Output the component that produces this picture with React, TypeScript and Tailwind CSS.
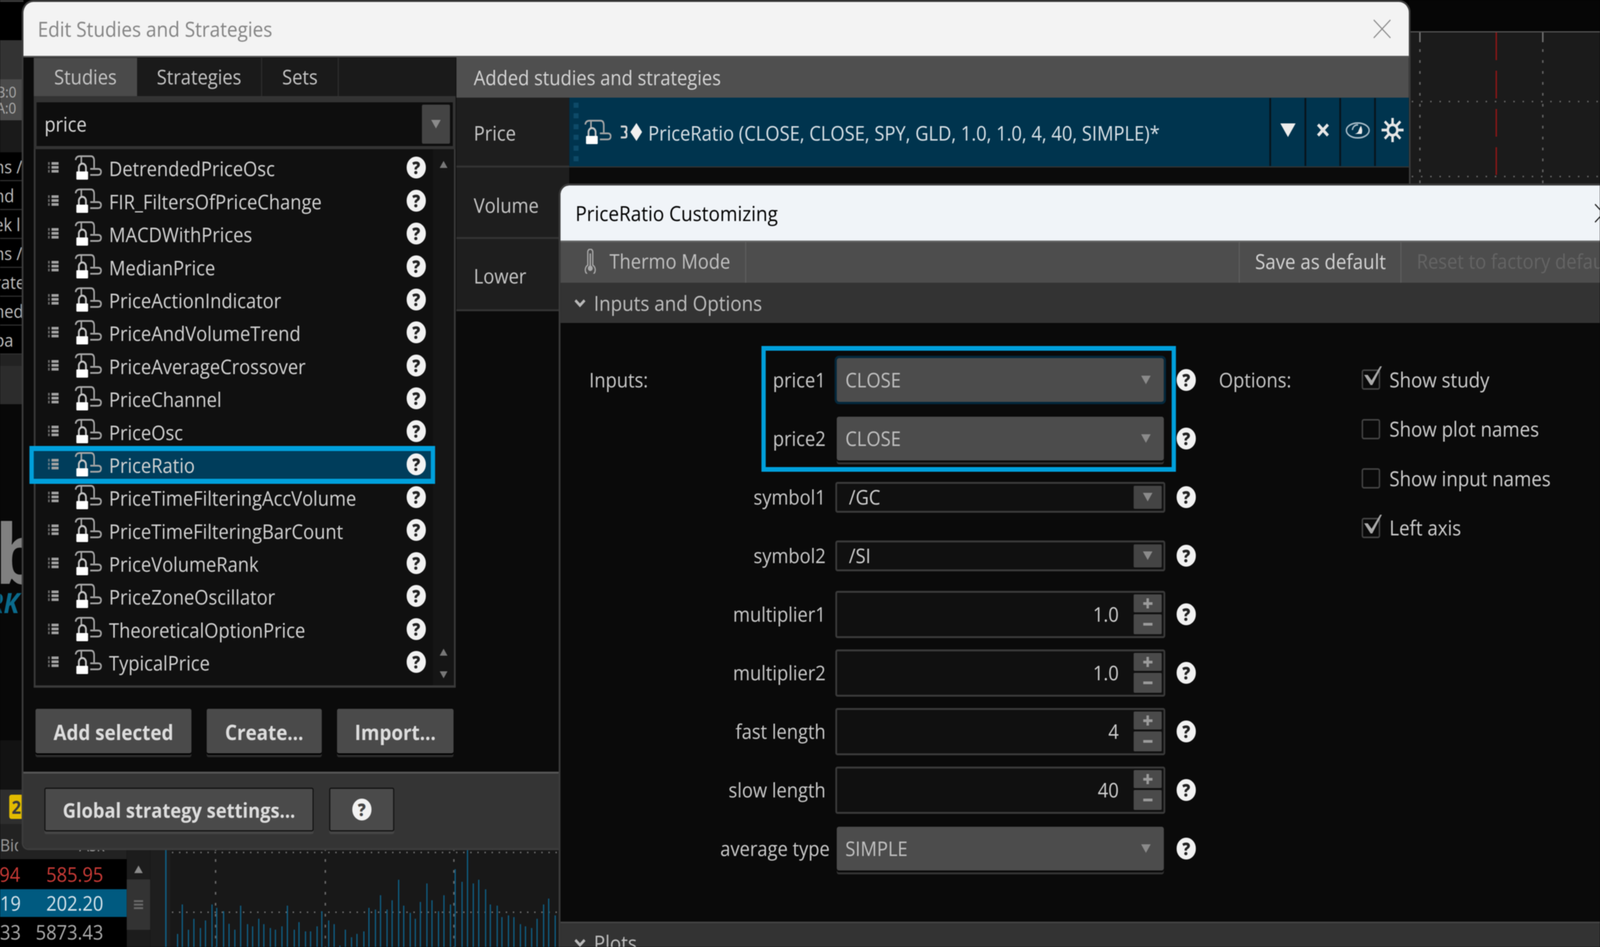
const studies = [
  'DetrendedPriceOsc',
  'FIR_FiltersOfPriceChange',
  'MACDWithPrices',
  'MedianPrice',
  'PriceActionIndicator',
  'PriceAndVolumeTrend',
  'PriceAverageCrossover',
  'PriceChannel',
  'PriceOsc',
  'PriceRatio',
  'PriceTimeFilteringAccVolume',
  'PriceTimeFilteringBarCount',
  'PriceVolumeRank',
  'PriceZoneOscillator',
  'TheoreticalOptionPrice',
  'TypicalPrice',
]

const sideRows = ['ns /', 'nd', 'ek l', 'ns /', 'rate', 'hed', 'pa']

// [x, top] read off the volume study under the dialog
const volume = [
  [490, 1490], [503, 1315], [520, 1465], [535, 1400], [553, 1455], [567, 1410], [585, 1315], [598, 1335],
  [617, 1355], [632, 1430], [648, 1465], [664, 1322], [683, 1432], [697, 1445], [714, 1400], [728, 1432],
  [746, 1455], [760, 1465], [778, 1445], [793, 1322], [812, 1465], [825, 1420], [843, 1475], [857, 1475],
  [875, 1445], [888, 1355], [907, 1410], [922, 1432], [938, 1560], [953, 1465], [970, 1510], [985, 1490],
  [1004, 1475], [1018, 1335], [1036, 1345], [1050, 1260], [1068, 1345], [1082, 1290], [1100, 1168], [1114, 1322],
  [1132, 1365], [1146, 1400], [1160, 1300], [1178, 1190], [1192, 1290], [1210, 1355], [1225, 1260], [1243, 1315],
  [1256, 1105], [1275, 1180], [1290, 980], [1306, 1190], [1321, 1168], [1340, 1225], [1353, 1315], [1372, 1322],
  [1385, 1390], [1403, 1380], [1418, 1390], [1436, 1432], [1450, 1445], [1467, 1455], [1482, 1400], [1500, 1315],
  [1514, 1280], [1532, 1380],
]

function Arrow({ color = '#8a8a8a', className = 'w-[27px] h-[22px]' }: { color?: string; className?: string }) {
  return (
    <svg viewBox="0 0 27 22" className={className}>
      <polygon points="0,0 27,0 13.5,22" fill={color} />
    </svg>
  )
}

function Help({ onGray = false }: { onGray?: boolean }) {
  return (
    <div className={`flex h-[56px] w-[54px] shrink-0 items-center justify-center rounded-full bg-[#f2f2f2] text-[44px] font-extrabold leading-none ${onGray ? 'text-[#444]' : 'text-[#222]'}`}>
      ?
    </div>
  )
}

function Handle() {
  return (
    <svg viewBox="0 0 30 28" className="h-[28px] w-[30px] shrink-0">
      {[0, 10, 20].map((y) => (
        <g key={y} fill="#a0a0a0">
          <rect x="0" y={y} width="5" height="7" opacity="0.6" />
          <rect x="10" y={y} width="20" height="7" />
        </g>
      ))}
    </svg>
  )
}

function LockIcon() {
  return (
    <svg viewBox="0 0 77 64" className="h-[64px] w-[77px] shrink-0" fill="none">
      <path d="M3 13Q4 3 15 3H46Q55 3 55 15V33M19 4V22" stroke="#a6a6a6" strokeWidth="4.5" />
      <path d="M44 35.5H66Q74.5 35.5 74.5 43Q74.5 51 66 51H44" stroke="#a6a6a6" strokeWidth="4.5" />
      <path d="M12 42V32A10 10 0 0 1 32 32V42" stroke="#c4c4c4" strokeWidth="5" />
      <rect x="5" y="42" width="33" height="21" rx="2" fill="#fff" />
    </svg>
  )
}

function StudyRow({ name }: { name: string }) {
  const selected = name === 'PriceRatio'
  return (
    <div className="relative flex h-[84.4px] items-center pr-[20px]">
      {selected && (
        <div className="absolute left-[-17px] top-[-5px] h-[97px] w-[1142px] border-x-[12px] border-y-[13px] border-[#00a0dc] bg-[#003d5b]" />
      )}
      <div className="relative ml-[35px] flex w-full items-center">
        <Handle />
        <div className="ml-[45px] mr-[20px]">
          <LockIcon />
        </div>
        <span className="flex-1 pt-[6px] text-[#d2d2d2]">{name}</span>
        <Help />
      </div>
    </div>
  )
}

function FlatButton({ label, className }: { label: string; className: string }) {
  return (
    <div className={`flex h-[114px] items-center justify-center rounded-[5px] bg-[#4a4a4a] pt-[4px] text-[53px] font-bold text-[#dcdcdc] shadow-[0_4px_0_#000,0_10px_0_#2b2b2b] ${className}`}>
      {label}
    </div>
  )
}

function Chevron() {
  return (
    <svg viewBox="0 0 34 22" className="h-[22px] w-[34px]" fill="none">
      <path d="M4 4L17 17L30 4" stroke="#b8b8b8" strokeWidth="7" />
    </svg>
  )
}

function SectionBar({ label, className }: { label: string; className: string }) {
  return (
    <div className={`flex shrink-0 items-center gap-[22px] bg-[#333] pl-[38px] text-[53px] text-[#bdbdbd] ${className}`}>
      <Chevron />
      {label}
    </div>
  )
}

function SelectBox({ value, focused = false }: { value: string; focused?: boolean }) {
  return (
    <div className={`mx-[4px] flex h-[112px] items-center justify-between rounded-[6px] bg-[#4c4c4c] pl-[24px] pr-[37px] text-[#c0c0c0] ${focused ? 'outline-[6px] outline-[#04283c]' : 'shadow-[0_5px_0_#0a0a0a,0_10px_0_#333]'}`}>
      {value}
      <Arrow />
    </div>
  )
}

function ComboBox({ value }: { value: string }) {
  return (
    <div className="flex h-[79px] items-center justify-between rounded-[6px] border-[5px] border-[#3a3a3a] bg-[#101010] pl-[33px] pr-[5px] text-[#cfcfcf]">
      {value}
      <div className="flex h-[59px] w-[79px] items-center justify-center rounded-[3px] bg-[#444]">
        <Arrow />
      </div>
    </div>
  )
}

function SpinBox({ value }: { value: string }) {
  return (
    <div className="flex h-[121px] items-center justify-end rounded-[6px] border-[5px] border-[#3a3a3a] bg-[#101010] pr-[5px] text-[#cfcfcf]">
      {value}
      <div className="ml-[42px] flex w-[79px] flex-col gap-[5px]">
        <div className="relative flex h-[46px] items-center justify-center rounded-[3px] bg-[#4a4a4a]">
          <div className="absolute h-[7px] w-[26px] bg-[#9a9a9a]" />
          <div className="absolute h-[26px] w-[7px] bg-[#9a9a9a]" />
        </div>
        <div className="flex h-[51px] items-center justify-center rounded-[3px] bg-[#4a4a4a]">
          <div className="h-[7px] w-[26px] bg-[#9a9a9a]" />
        </div>
      </div>
    </div>
  )
}

function InputRow({ label, children }: { label: string; children: React.ReactNode }) {
  return (
    <div className="flex h-[150px] items-center">
      <span className="w-[297px] whitespace-nowrap text-right text-[#c8c8c8]">{label}</span>
      <div className="ml-[27px] w-[929px]">{children}</div>
      <div className="flex w-[118px] justify-center">
        <Help />
      </div>
    </div>
  )
}

function OptionRow({ label, checked = false }: { label: string; checked?: boolean }) {
  return (
    <div className="flex h-[126.5px] items-center gap-[26px] whitespace-nowrap text-[52.6px] text-[#cdcdcd]">
      <div className="relative h-[52px] w-[52px] rounded-[6px] border-[4px] border-[#444]">
        {checked && (
          <svg viewBox="0 0 60 64" className="absolute left-[-4px] top-[-14px] h-[64px] w-[60px]">
            <polygon points="7,24 17,24 28,38 52,2 57,2 30,50 25,50" fill="#a9a9a9" />
          </svg>
        )}
      </div>
      {label}
    </div>
  )
}

function LeftStrip() {
  return (
    <div className="flex w-[66px] flex-col overflow-hidden whitespace-nowrap text-[46px] leading-none">
      <div className="h-[5px] shrink-0 bg-[#3a3a3a]" />
      <div className="h-[98px] shrink-0 bg-black" />
      <div className="h-[100px] shrink-0 bg-[#333]" />
      <div className="flex h-[105px] shrink-0 flex-col justify-center gap-[3px] bg-[#4a4a4a] text-[38px] text-[#aaa]">
        <span className="-ml-[10px]">B:0</span>
        <span className="-ml-[10px]">A:0</span>
      </div>
      <div className="h-[82px] shrink-0 bg-[#1a1a1a]" />
      {sideRows.map((row, i) => (
        <div key={i} className="flex h-[74px] shrink-0 items-center justify-start border-b-[3px] border-[#2e2e2e] bg-black text-[#bdbdbd]">
          <span className="-ml-[16px]">{row}</span>
        </div>
      ))}
      <div className="h-[29px] shrink-0 bg-[#222]" />
      <div className="h-[98px] shrink-0 bg-[#2c2c2c]" />
      <div className="flex h-[861px] shrink-0 flex-col bg-[#080808] pt-[274px]">
        <span className="-ml-[14px] h-[207px] text-[212px] font-bold leading-[207px] text-[#808080]">b</span>
        <span className="-ml-[34px] mt-[-2px] text-[72px] font-bold italic leading-[56px] text-[#0a6a8c]">RK</span>
      </div>
      <div className="h-[126px] shrink-0 bg-[#121212]" />
      <div className="flex h-[88px] shrink-0 items-center justify-end bg-[#2e2e2e]">
        <div className="flex h-[62px] w-[40px] items-center justify-center rounded-[6px] bg-[#e2bb00] font-bold text-[#3a3a3a]">2</div>
      </div>
    </div>
  )
}

function BottomPanel() {
  return (
    <div className="flex h-[315px] shrink-0 overflow-hidden whitespace-nowrap leading-none">
      <div className="flex w-[357px] shrink-0 flex-col bg-black">
        <div className="flex h-[90px] shrink-0 items-center bg-[#222] pt-[16px] text-[44px] text-[#9a9a9a]">
          <span className="w-[51px] overflow-hidden text-right">Bid</span>
          <span className="ml-[172px]">Ask</span>
        </div>
        <div className="flex h-[77px] items-center text-[#c93a36]">
          <span className="w-[56px] overflow-hidden">
            <span className="-ml-[2px]">94</span>
          </span>
          <span className="w-[235px] text-right">585.95</span>
        </div>
        <div className="flex h-[71px] items-center bg-[#005a80] text-[#d6e3ea]">
          <span className="w-[56px] overflow-hidden">19</span>
          <span className="w-[235px] text-right">202.20</span>
        </div>
        <div className="flex h-[77px] items-center text-[#ababab]">
          <span className="w-[56px] overflow-hidden">33</span>
          <span className="w-[235px] text-right">5873.43</span>
        </div>
      </div>
      <div className="flex w-[66px] shrink-0 flex-col items-center bg-[#1c1c1c] pt-[106px]">
        <Arrow color="#8a8a8a" className="h-[20px] w-[24px] rotate-180" />
        <div className="mt-[16px] flex h-[129px] w-full flex-col items-center justify-center gap-[4px] bg-[#333]">
          <div className="h-[5px] w-[26px] bg-[#666]" />
          <div className="h-[5px] w-[26px] bg-[#666]" />
          <div className="h-[5px] w-[26px] bg-[#666]" />
        </div>
      </div>
      <svg viewBox="423 2110 3544 315" className="h-[315px] w-[3544px] shrink-0">
        <rect x="423" y="2110" width="3544" height="315" fill="#181818" />
        <rect x="423" y="2110" width="57" height="315" fill="#1e1e1e" />
        <rect x="465" y="2110" width="4" height="315" fill="#0f5f85" />
        {[2183, 2336].map((y) => (
          <line key={y} x1="484" x2="1578" y1={y} y2={y} stroke="#6a6a6a" strokeWidth="4" strokeDasharray="4 16" />
        ))}
        {[607, 916, 1278].map((x) => (
          <line key={x} x1={x} x2={x} y1="2172" y2="2425" stroke="#6a6a6a" strokeWidth="4" strokeDasharray="7 21" />
        ))}
        {volume.map(([x, top]) => (
          <line key={x} x1={x / 0.98} x2={x / 0.98} y1={1750 + top / 2.323} y2="2425" stroke="#0f5f85" strokeWidth="3.5" />
        ))}
      </svg>
    </div>
  )
}

function RightChart() {
  return (
    <div className="flex w-[538px] shrink-0 flex-col bg-black">
      <div className="h-[80px] bg-[#060606]" />
      <div className="h-[3px] bg-[#555]" />
      <svg viewBox="3967 83 538 2342" className="h-[2342px] w-[538px] bg-[#1b1b1b]">
        {[3998, 4344].map((x) => (
          <g key={x}>
            <line x1={x} x2={x} y1="83" y2="108" stroke="#777" strokeWidth="4" />
            <line x1={x} x2={x} y1="126" y2="470" stroke="#666" strokeWidth="4" strokeDasharray="7 21" />
          </g>
        ))}
        <line x1="4213" x2="4213" y1="83" y2="452" stroke="#8c1616" strokeWidth="4" strokeDasharray="71 27" />
        {[260, 452].map((y) => (
          <line key={y} x1="3975" x2="4505" y1={y} y2={y} stroke="#666" strokeWidth="4" strokeDasharray="4 22" />
        ))}
      </svg>
    </div>
  )
}

function StudiesPanel() {
  return (
    <div className="flex w-[1219px] shrink-0 flex-col pl-[29px] pr-[2px] pt-[1px]">
      <div className="flex h-[98px] shrink-0 bg-[#1a1a1a] text-[#c4c4c4]">
        <div className="flex w-[291px] items-center justify-center bg-[#4a4a4a]">Studies</div>
        <div className="flex w-[352px] items-center justify-center border-r-[3px] border-[#2e2e2e]">Strategies</div>
        <div className="flex w-[216px] items-center justify-center border-r-[3px] border-[#2e2e2e]">Sets</div>
      </div>
      <div className="flex h-[136px] shrink-0 items-center justify-between border-x-[8px] border-b-[8px] border-t-[16px] border-[#333] bg-[#0e0e0e] pl-[22px] pr-[8px] text-[#d8d8d8]">
        price
        <div className="flex h-[100px] w-[79px] items-center justify-center rounded-[4px] bg-[#444]">
          <Arrow />
        </div>
      </div>
      <div className="flex h-[1379px] shrink-0 border-x-[5px] border-b-[6px] border-[#3a3a3a] bg-[#101010]">
        <div className="w-[1119px] shrink-0 pt-[5px]">
          {studies.map((name) => (
            <StudyRow key={name} name={name} />
          ))}
        </div>
        <div className="flex flex-1 flex-col items-center bg-[#151515] pb-[18px] pt-[30px]">
          <Arrow color="#777" className="h-[18px] w-[22px] rotate-180" />
          <div className="flex-1" />
          <Arrow color="#777" className="h-[18px] w-[22px] rotate-180" />
          <div className="h-[40px]" />
          <Arrow color="#777" className="h-[18px] w-[22px]" />
        </div>
      </div>
      <div className="mt-[54px] flex gap-[43px] pl-[5px]">
        <FlatButton label="Add selected" className="w-[439px]" />
        <FlatButton label="Create..." className="w-[324px]" />
        <FlatButton label="Import..." className="w-[328px]" />
      </div>
    </div>
  )
}

function AddedPanel() {
  return (
    <div className="flex flex-1 flex-col">
      <div className="flex h-[103px] shrink-0 items-center bg-[#4f4f4f] pl-[49px] text-[#d4d4d4]">Added studies and strategies</div>
      <div className="flex shrink-0">
        <div className="flex w-[318px] shrink-0 flex-col text-[#c6c6c6]">
          <div className="flex h-[179px] items-center border-b-[5px] border-[#333] bg-[#1e1e1e] pl-[49px] pt-[8px]">Price</div>
          <div className="flex h-[183px] items-center border-b-[5px] border-[#333] bg-[#1e1e1e] pl-[49px] pt-[16px]">Volume</div>
          <div className="flex h-[185px] items-center border-b-[5px] border-[#333] bg-[#1e1e1e] pl-[49px] pt-[10px]">Lower</div>
        </div>
        <div className="flex flex-1 flex-col">
          <div className="flex h-[179px] shrink-0 items-center border-b-[3px] border-[#333] bg-[#00344e] text-[#d8e0e6]">
            <div className="ml-[12px] flex h-[150px] w-[14px] flex-col justify-between">
              {[0, 1, 2, 3, 4, 5].map((i) => (
                <div key={i} className="h-[13px] bg-[#0d4a68]" />
              ))}
            </div>
            <div className="ml-[16px]">
              <LockIcon />
            </div>
            <svg viewBox="0 0 62 46" className="ml-[24px] h-[46px] w-[62px]">
              <path d="M2 9H14Q18 9 18 13V18Q18 22 12 23Q18 24 18 28V33Q18 37 14 37H2" fill="none" stroke="#d8d8d8" strokeWidth="5" />
              <polygon points="29,23 46,0 62,23 46,46" fill="#f0f0f0" />
            </svg>
            <span className="ml-[17px] flex-1 whitespace-nowrap pt-[6px]">PriceRatio (CLOSE, CLOSE, SPY, GLD, 1.0, 1.0, 4, 40, SIMPLE)*</span>
            <div className="flex h-[174px] w-[99px] items-center justify-center border-l-[5px] border-[#08141c] pb-[10px]">
              <Arrow color="#ededed" className="h-[37px] w-[43px]" />
            </div>
            <div className="flex h-[174px] w-[98px] items-center justify-center border-l-[5px] border-[#08141c] pb-[10px]">
              <svg viewBox="0 0 36 36" className="h-[36px] w-[36px]">
                <path d="M4 4L32 32M32 4L4 32" stroke="#e6e6e6" strokeWidth="8" />
              </svg>
            </div>
            <div className="flex h-[174px] w-[98px] items-center justify-center border-l-[5px] border-[#08141c] pb-[8px]">
              <svg viewBox="0 0 70 46" className="h-[46px] w-[70px]" fill="none">
                <ellipse cx="35" cy="23" rx="32" ry="19" stroke="#a6bac6" strokeWidth="4" />
                <path d="M20 22A14 14 0 0 1 36 9" stroke="#a6bac6" strokeWidth="4" />
                <path d="M44 11Q50 22 46 32H26Q36 30 38 22Q40 16 44 11Z" fill="#e8e8e8" />
              </svg>
            </div>
            <div className="flex h-[174px] w-[98px] items-center justify-center border-l-[5px] border-[#08141c] pb-[10px]">
              <svg viewBox="0 0 66 66" className="h-[66px] w-[66px]" fill="none">
                <path d="M33 2V64M2 33H64M11 11L55 55M55 11L11 55" stroke="#e6e6e6" strokeWidth="7" />
                <circle cx="33" cy="33" r="17" fill="#e6e6e6" />
                <circle cx="33" cy="33" r="10" fill="#00344e" />
              </svg>
            </div>
          </div>
          <div className="flex-1 bg-[#0b0b0b]" />
        </div>
      </div>
      <div className="flex-1 bg-[#0b0b0b]" />
    </div>
  )
}

function StudiesDialog() {
  return (
    <div className="absolute left-[66px] top-[5px] flex h-[2167px] w-[3901px] flex-col overflow-hidden rounded-t-[28px] rounded-b-[14px] bg-[#0b0b0b] shadow-[0_0_0_5px_#3c3c3c]">
      <div className="flex h-[142px] shrink-0 items-center justify-between border-b-[4px] border-[#555] bg-[#f3f3f3] pl-[40px] pr-[51px] text-[53.4px] text-[#858585]">
        Edit Studies and Strategies
        <svg viewBox="0 0 49 48" className="h-[48px] w-[49px]">
          <path d="M1 1L48 47M48 1L1 47" stroke="#8a8a8a" strokeWidth="3" />
        </svg>
      </div>
      <div className="flex h-[1829px] shrink-0 overflow-hidden">
        <StudiesPanel />
        <AddedPanel />
      </div>
      <div className="flex flex-1 gap-[44px] border-t-[5px] border-[#555] bg-[#343434] pl-[59px] pt-[36px]">
        <div className="flex h-[112px] w-[758px] items-center justify-center rounded-[5px] border-[3px] border-[#101010] bg-[#4a4a4a] pt-[4px] font-bold text-[#dcdcdc] shadow-[0_7px_0_#444]">
          Global strategy settings...
        </div>
        <div className="flex h-[112px] w-[183px] items-center justify-center rounded-[5px] border-[3px] border-[#101010] bg-[#4a4a4a] shadow-[0_7px_0_#444]">
          <Help onGray />
        </div>
      </div>
    </div>
  )
}

function CustomizingDialog() {
  return (
    <div className="absolute left-[1578px] top-[475px] flex h-[1950px] w-[2927px] flex-col overflow-hidden rounded-tl-[24px] bg-[#0a0a0a] shadow-[0_0_0_5px_#3c3c3c]">
      <div className="flex h-[141px] shrink-0 items-center justify-between overflow-hidden rounded-tl-[24px] bg-[#f0f4f8] pl-[42px] text-[53.4px] text-black">
        PriceRatio Customizing
        <svg viewBox="0 0 49 48" className="mr-[-34px] h-[48px] w-[49px] shrink-0">
          <path d="M1 1L48 47M48 1L1 47" stroke="#111" strokeWidth="3" />
        </svg>
      </div>
      <div className="flex h-[108px] shrink-0 items-center border-t-[4px] border-[#666] bg-[#4d4d4d] text-[#c0c0c0]">
        <div className="flex h-full w-[523px] shrink-0 items-center border-r-[3px] border-[#5e5e5e] pb-[6px] pl-[67px]">
          <svg viewBox="0 0 34 64" className="h-[64px] w-[34px]" fill="none">
            <path d="M10 42V8A7 7 0 0 1 24 8V42A14 14 0 1 1 10 42Z" stroke="#aaa" strokeWidth="3.5" />
            <circle cx="17" cy="50" r="7" fill="#aaa" />
            <path d="M17 12V44" stroke="#aaa" strokeWidth="4" />
          </svg>
          <span className="ml-[37px]">Thermo Mode</span>
        </div>
        <div className="flex-1" />
        <div className="flex h-full w-[455px] shrink-0 items-center border-l-[3px] border-[#5e5e5e] pb-[6px] pl-[43px] text-[52.6px] text-[#d2d2d2]">Save as default</div>
        <div className="flex h-full w-[562px] shrink-0 items-center overflow-hidden whitespace-nowrap border-l-[3px] border-[#5e5e5e] pb-[6px] pl-[43px] text-[#646464]">Reset to factory defaults</div>
      </div>
      <SectionBar label="Inputs and Options" className="h-[103px]" />
      <div className="flex h-[1533px] shrink-0 pt-[71px]">
        <div className="flex h-[150px] w-[450px] shrink-0 items-center pl-[81px] text-[#c8c8c8]">Inputs:</div>
        <div className="flex shrink-0 flex-col">
          <div className="relative">
            <InputRow label="price1">
              <SelectBox value="CLOSE" focused />
            </InputRow>
            <InputRow label="price2">
              <SelectBox value="CLOSE" />
            </InputRow>
            <div className="absolute left-[116px] top-[-12px] h-[322px] w-[1167px] border-[12px] border-[#00a0dc]" />
          </div>
          <InputRow label="symbol1">
            <ComboBox value="/GC" />
          </InputRow>
          <InputRow label="symbol2">
            <ComboBox value="/SI" />
          </InputRow>
          <InputRow label="multiplier1">
            <SpinBox value="1.0" />
          </InputRow>
          <InputRow label="multiplier2">
            <SpinBox value="1.0" />
          </InputRow>
          <InputRow label="fast length">
            <SpinBox value="4" />
          </InputRow>
          <InputRow label="slow length">
            <SpinBox value="40" />
          </InputRow>
          <InputRow label="average type">
            <SelectBox value="SIMPLE" />
          </InputRow>
        </div>
        <div className="flex h-[150px] w-[435px] shrink-0 items-center pl-[33px] text-[#c8c8c8]">Options:</div>
        <div className="flex flex-col pt-[11px]">
          <OptionRow label="Show study" checked />
          <OptionRow label="Show plot names" />
          <OptionRow label="Show input names" />
          <OptionRow label="Left axis" checked />
        </div>
      </div>
      <SectionBar label="Plots" className="h-[103px] border-t-[4px] border-[#444]" />
    </div>
  )
}

export default function App() {
  // the browser window stops at 4096px wide, so the 4505px layout is narrowed to fit it
  return (
    <div className="h-[2425px] w-full overflow-hidden bg-black">
      <div className="relative h-[2425px] w-[4505px] origin-top-left scale-x-[0.9092] overflow-hidden font-['Open_Sans',sans-serif] text-[51.6px] leading-none blur-[1px]">
        <div className="flex h-full">
          <div className="flex w-[3967px] shrink-0 flex-col">
            <div className="flex-1 overflow-hidden">
              <LeftStrip />
            </div>
            <BottomPanel />
          </div>
          <RightChart />
        </div>
        <StudiesDialog />
        <CustomizingDialog />
      </div>
    </div>
  )
}
